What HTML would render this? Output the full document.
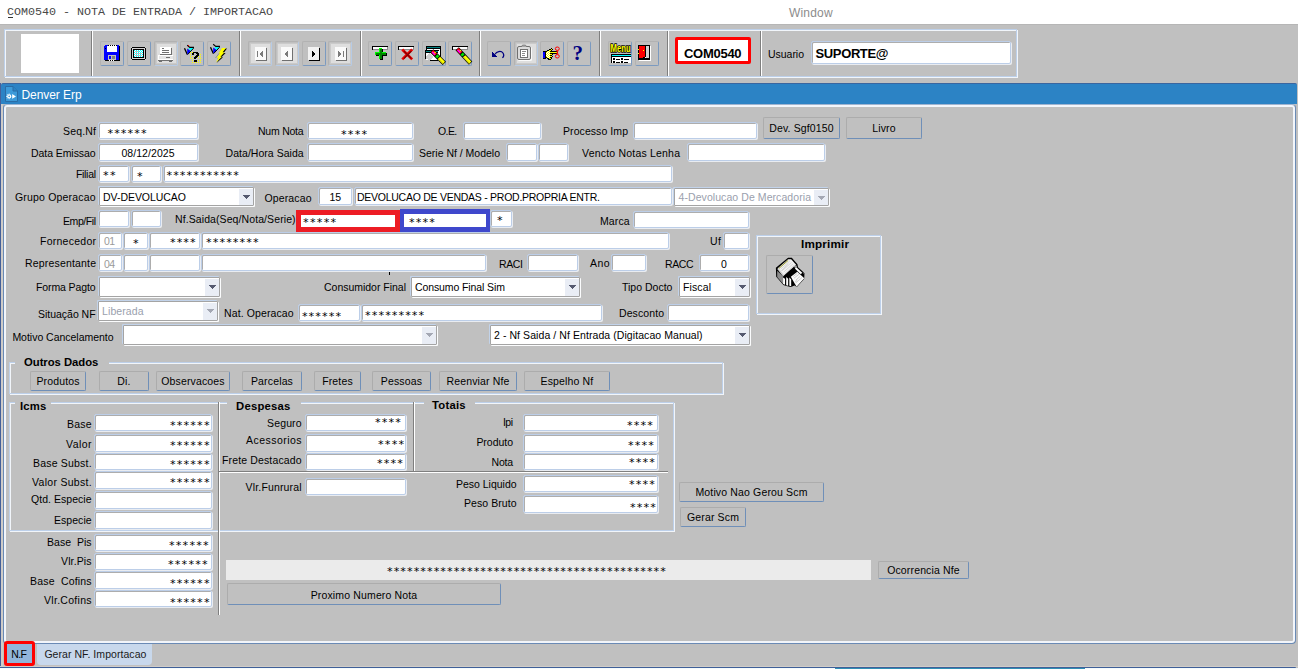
<!DOCTYPE html>
<html lang="pt-BR"><head><meta charset="utf-8"><title>COM0540 - NOTA DE ENTRADA / IMPORTACAO</title>
<style>
html,body{margin:0;padding:0}
body{width:1298px;height:669px;overflow:hidden;background:#c0c0c0;position:relative;font-family:"Liberation Sans",sans-serif;font-size:10.5px}
.t{position:absolute;white-space:pre;display:block}
.f{position:absolute;box-sizing:border-box;background:#fff;border:1px solid #bccee8;border-radius:2px;box-shadow:inset 1px 1px 0 #adadad,1px 1px 0 #e9ecf1}
.cb{position:absolute;box-sizing:border-box;background:#fff;border:1px solid #a4a4a4;border-radius:1px;box-shadow:-1px -1px 0 #c2d3ea,1px 1px 0 #fbfcfd}
.cb i{position:absolute;right:0;top:1px;bottom:0;width:14px;background:#e9edf5}
.cb b{position:absolute;right:6px;top:10px;width:1px;height:1px;color:#555a70;background:currentColor;box-shadow:-1px -1px 0 currentColor,0px -1px 0 currentColor,1px -1px 0 currentColor,-2px -2px 0 currentColor,-1px -2px 0 currentColor,0px -2px 0 currentColor,1px -2px 0 currentColor,2px -2px 0 currentColor,-3px -3px 0 currentColor,-2px -3px 0 currentColor,-1px -3px 0 currentColor,0px -3px 0 currentColor,1px -3px 0 currentColor,2px -3px 0 currentColor,3px -3px 0 currentColor}
.cb.dis b{color:#a4a8b4}
.btn{position:absolute;box-sizing:border-box;background:#c0c0c0;border:1px solid;border-color:#acacac #6f8fb8 #6f8fb8 #acacac;border-radius:2px;text-align:center;color:#000;white-space:nowrap;overflow:hidden;letter-spacing:0.15px}
.tb{position:absolute;box-sizing:border-box;width:24px;height:25px;border:1px solid;border-color:#b2b2b2 #7b9ac0 #7b9ac0 #b2b2b2;border-radius:2px}
.tb.d{border-color:#b2b2b2 #b6cbe6 #b6cbe6 #b2b2b2}
.tb.d:before{content:"";position:absolute;left:2px;top:2px;width:19px;height:19px;background:#dedede;box-shadow:0 0 0 1px #cacaca}
.tb svg{position:absolute;left:0;top:0}
.etch{position:absolute;box-sizing:border-box;border:1px solid #bdd0ea;box-shadow:inset 1px 1px 0 #f1f5fa,1px 1px 0 #f1f5fa}
.vsep{position:absolute;width:1px;background:#7f7f7f;box-shadow:1px 0 0 #fff}
.hsep{position:absolute;height:1px;background:#7f7f7f;box-shadow:0 1px 0 #fff}
</style></head>
<body>
<div style="position:absolute;left:0;top:0;width:1298px;height:24px;background:#fff"></div>
<span class="t" id="t1" style="left:7.00px;top:6.64px;font-size:11.7px;line-height:11.7px;color:#484848;font-family:'Liberation Mono', monospace;letter-spacing:-0.014px;">COM0540 - NOTA DE ENTRADA / IMPORTACAO</span>
<div style="position:absolute;left:8px;top:17px;width:5px;height:1px;background:#333"></div>
<span class="t" id="t2" style="left:789.00px;top:7.24px;font-size:12px;line-height:12px;color:#8c8c8c;font-family:'Liberation Sans', sans-serif;letter-spacing:0.183px;">Window</span>
<div class="etch" style="left:4px;top:29px;width:1013px;height:48px"></div>
<div style="position:absolute;left:21px;top:34px;width:58px;height:39px;background:#fff"></div>
<div class="vsep" style="left:91px;top:31px;height:45px"></div>
<div class="vsep" style="left:239px;top:31px;height:45px"></div>
<div class="vsep" style="left:360px;top:31px;height:45px"></div>
<div class="vsep" style="left:479px;top:31px;height:45px"></div>
<div class="vsep" style="left:599px;top:31px;height:45px"></div>
<div class="vsep" style="left:667px;top:31px;height:45px"></div>
<div class="vsep" style="left:760px;top:31px;height:45px"></div>
<div class="tb" style="left:100px;top:41px"></div>
<div class="tb" style="left:127px;top:41px"></div>
<div class="tb d" style="left:154px;top:41px"></div>
<div class="tb" style="left:180px;top:41px"></div>
<div class="tb" style="left:207px;top:41px"></div>
<div class="tb d" style="left:248px;top:41px"></div>
<div class="tb d" style="left:275px;top:41px"></div>
<div class="tb" style="left:302px;top:41px"></div>
<div class="tb d" style="left:328px;top:41px"></div>
<div class="tb" style="left:368px;top:41px"></div>
<div class="tb" style="left:395px;top:41px"></div>
<div class="tb" style="left:422px;top:41px"></div>
<div class="tb" style="left:448px;top:41px"></div>
<div class="tb" style="left:487px;top:41px"></div>
<div class="tb d" style="left:514px;top:41px"></div>
<div class="tb" style="left:540px;top:41px"></div>
<div class="tb" style="left:567px;top:41px"></div>
<div class="tb" style="left:608px;top:41px"></div>
<div class="tb" style="left:635px;top:41px"></div>
<svg style="position:absolute;left:96px;top:40px" width="570" height="28" viewBox="96 40 570 28" shape-rendering="crispEdges"><rect x="105" y="45" width="3" height="1" fill="#0000ff"/><rect x="108" y="45" width="1" height="1" fill="#000"/><rect x="109" y="45" width="1" height="1" fill="#fff"/><rect x="110" y="45" width="1" height="1" fill="#000"/><rect x="111" y="45" width="1" height="1" fill="#fff"/><rect x="112" y="45" width="1" height="1" fill="#000"/><rect x="113" y="45" width="1" height="1" fill="#fff"/><rect x="114" y="45" width="1" height="1" fill="#000"/><rect x="115" y="45" width="1" height="1" fill="#fff"/><rect x="116" y="45" width="1" height="1" fill="#000"/><rect x="117" y="45" width="2" height="1" fill="#0000ff"/><rect x="104" y="46" width="3" height="1" fill="#0000ff"/><rect x="107" y="46" width="10" height="1" fill="#fff"/><rect x="117" y="46" width="2" height="1" fill="#0000ff"/><rect x="119" y="46" width="1" height="1" fill="#000"/><rect x="104" y="47" width="3" height="1" fill="#0000ff"/><rect x="107" y="47" width="10" height="1" fill="#fff"/><rect x="117" y="47" width="2" height="1" fill="#0000ff"/><rect x="119" y="47" width="1" height="1" fill="#000"/><rect x="104" y="48" width="1" height="1" fill="#0000ff"/><rect x="105" y="48" width="1" height="1" fill="#000"/><rect x="106" y="48" width="1" height="1" fill="#0000ff"/><rect x="107" y="48" width="10" height="1" fill="#fff"/><rect x="117" y="48" width="2" height="1" fill="#0000ff"/><rect x="119" y="48" width="1" height="1" fill="#000"/><rect x="104" y="49" width="3" height="1" fill="#0000ff"/><rect x="107" y="49" width="10" height="1" fill="#fff"/><rect x="117" y="49" width="2" height="1" fill="#0000ff"/><rect x="119" y="49" width="1" height="1" fill="#000"/><rect x="104" y="50" width="3" height="1" fill="#0000ff"/><rect x="107" y="50" width="10" height="1" fill="#fff"/><rect x="117" y="50" width="2" height="1" fill="#0000ff"/><rect x="119" y="50" width="1" height="1" fill="#000"/><rect x="104" y="51" width="3" height="1" fill="#0000ff"/><rect x="107" y="51" width="10" height="1" fill="#fff"/><rect x="117" y="51" width="2" height="1" fill="#0000ff"/><rect x="119" y="51" width="1" height="1" fill="#000"/><rect x="104" y="52" width="15" height="1" fill="#0000ff"/><rect x="119" y="52" width="1" height="1" fill="#000"/><rect x="104" y="53" width="15" height="1" fill="#0000ff"/><rect x="119" y="53" width="1" height="1" fill="#000"/><rect x="104" y="54" width="15" height="1" fill="#0000ff"/><rect x="119" y="54" width="1" height="1" fill="#000"/><rect x="104" y="55" width="4" height="1" fill="#0000ff"/><rect x="108" y="55" width="8" height="1" fill="#c0c0c0"/><rect x="116" y="55" width="3" height="1" fill="#0000ff"/><rect x="119" y="55" width="1" height="1" fill="#000"/><rect x="104" y="56" width="4" height="1" fill="#0000ff"/><rect x="108" y="56" width="1" height="1" fill="#c0c0c0"/><rect x="109" y="56" width="2" height="1" fill="#0000ff"/><rect x="111" y="56" width="1" height="1" fill="#c0c0c0"/><rect x="112" y="56" width="3" height="1" fill="#808080"/><rect x="115" y="56" width="1" height="1" fill="#c0c0c0"/><rect x="116" y="56" width="3" height="1" fill="#0000ff"/><rect x="119" y="56" width="1" height="1" fill="#000"/><rect x="104" y="57" width="4" height="1" fill="#0000ff"/><rect x="108" y="57" width="1" height="1" fill="#c0c0c0"/><rect x="109" y="57" width="2" height="1" fill="#0000ff"/><rect x="111" y="57" width="1" height="1" fill="#c0c0c0"/><rect x="112" y="57" width="3" height="1" fill="#808080"/><rect x="115" y="57" width="1" height="1" fill="#c0c0c0"/><rect x="116" y="57" width="3" height="1" fill="#0000ff"/><rect x="119" y="57" width="1" height="1" fill="#000"/><rect x="104" y="58" width="4" height="1" fill="#0000ff"/><rect x="108" y="58" width="1" height="1" fill="#c0c0c0"/><rect x="109" y="58" width="2" height="1" fill="#0000ff"/><rect x="111" y="58" width="1" height="1" fill="#c0c0c0"/><rect x="112" y="58" width="3" height="1" fill="#808080"/><rect x="115" y="58" width="1" height="1" fill="#c0c0c0"/><rect x="116" y="58" width="3" height="1" fill="#0000ff"/><rect x="119" y="58" width="1" height="1" fill="#000"/><rect x="104" y="59" width="4" height="1" fill="#0000ff"/><rect x="108" y="59" width="8" height="1" fill="#c0c0c0"/><rect x="116" y="59" width="3" height="1" fill="#0000ff"/><rect x="119" y="59" width="1" height="1" fill="#000"/><rect x="105" y="60" width="4" height="1" fill="#000"/><rect x="109" y="60" width="1" height="1" fill="#fff"/><rect x="110" y="60" width="1" height="1" fill="#000"/><rect x="111" y="60" width="1" height="1" fill="#fff"/><rect x="112" y="60" width="1" height="1" fill="#000"/><rect x="113" y="60" width="1" height="1" fill="#fff"/><rect x="114" y="60" width="6" height="1" fill="#000"/><rect x="131" y="47" width="1" height="1" fill="#d4d4d4"/><rect x="132" y="47" width="13" height="1" fill="#000"/><rect x="145" y="47" width="1" height="1" fill="#d4d4d4"/><rect x="131" y="48" width="1" height="1" fill="#000"/><rect x="132" y="48" width="13" height="1" fill="#d4d4d4"/><rect x="145" y="48" width="1" height="1" fill="#000"/><rect x="131" y="49" width="1" height="1" fill="#000"/><rect x="132" y="49" width="1" height="1" fill="#d4d4d4"/><rect x="133" y="49" width="11" height="1" fill="#000"/><rect x="144" y="49" width="1" height="1" fill="#d4d4d4"/><rect x="145" y="49" width="1" height="1" fill="#000"/><rect x="131" y="50" width="1" height="1" fill="#000"/><rect x="132" y="50" width="1" height="1" fill="#d4d4d4"/><rect x="133" y="50" width="1" height="1" fill="#000"/><rect x="134" y="50" width="1" height="1" fill="#00ffff"/><rect x="135" y="50" width="1" height="1" fill="#fff"/><rect x="136" y="50" width="1" height="1" fill="#00ffff"/><rect x="137" y="50" width="1" height="1" fill="#fff"/><rect x="138" y="50" width="1" height="1" fill="#00ffff"/><rect x="139" y="50" width="1" height="1" fill="#fff"/><rect x="140" y="50" width="1" height="1" fill="#00ffff"/><rect x="141" y="50" width="1" height="1" fill="#fff"/><rect x="142" y="50" width="1" height="1" fill="#00ffff"/><rect x="143" y="50" width="1" height="1" fill="#000"/><rect x="144" y="50" width="1" height="1" fill="#d4d4d4"/><rect x="145" y="50" width="1" height="1" fill="#000"/><rect x="131" y="51" width="1" height="1" fill="#000"/><rect x="132" y="51" width="1" height="1" fill="#d4d4d4"/><rect x="133" y="51" width="1" height="1" fill="#000"/><rect x="134" y="51" width="1" height="1" fill="#fff"/><rect x="135" y="51" width="4" height="1" fill="#c0c0c0"/><rect x="139" y="51" width="1" height="1" fill="#00ffff"/><rect x="140" y="51" width="1" height="1" fill="#fff"/><rect x="141" y="51" width="1" height="1" fill="#00ffff"/><rect x="142" y="51" width="1" height="1" fill="#fff"/><rect x="143" y="51" width="1" height="1" fill="#000"/><rect x="144" y="51" width="1" height="1" fill="#d4d4d4"/><rect x="145" y="51" width="1" height="1" fill="#000"/><rect x="131" y="52" width="1" height="1" fill="#000"/><rect x="132" y="52" width="1" height="1" fill="#d4d4d4"/><rect x="133" y="52" width="1" height="1" fill="#000"/><rect x="134" y="52" width="1" height="1" fill="#00ffff"/><rect x="135" y="52" width="1" height="1" fill="#fff"/><rect x="136" y="52" width="1" height="1" fill="#00ffff"/><rect x="137" y="52" width="1" height="1" fill="#fff"/><rect x="138" y="52" width="1" height="1" fill="#00ffff"/><rect x="139" y="52" width="1" height="1" fill="#fff"/><rect x="140" y="52" width="1" height="1" fill="#00ffff"/><rect x="141" y="52" width="1" height="1" fill="#fff"/><rect x="142" y="52" width="1" height="1" fill="#00ffff"/><rect x="143" y="52" width="1" height="1" fill="#000"/><rect x="144" y="52" width="1" height="1" fill="#d4d4d4"/><rect x="145" y="52" width="1" height="1" fill="#000"/><rect x="131" y="53" width="1" height="1" fill="#000"/><rect x="132" y="53" width="1" height="1" fill="#d4d4d4"/><rect x="133" y="53" width="1" height="1" fill="#000"/><rect x="134" y="53" width="1" height="1" fill="#fff"/><rect x="135" y="53" width="7" height="1" fill="#c0c0c0"/><rect x="142" y="53" width="1" height="1" fill="#fff"/><rect x="143" y="53" width="1" height="1" fill="#000"/><rect x="144" y="53" width="1" height="1" fill="#d4d4d4"/><rect x="145" y="53" width="1" height="1" fill="#000"/><rect x="131" y="54" width="1" height="1" fill="#000"/><rect x="132" y="54" width="1" height="1" fill="#d4d4d4"/><rect x="133" y="54" width="1" height="1" fill="#000"/><rect x="134" y="54" width="1" height="1" fill="#00ffff"/><rect x="135" y="54" width="1" height="1" fill="#fff"/><rect x="136" y="54" width="1" height="1" fill="#00ffff"/><rect x="137" y="54" width="1" height="1" fill="#fff"/><rect x="138" y="54" width="1" height="1" fill="#00ffff"/><rect x="139" y="54" width="1" height="1" fill="#fff"/><rect x="140" y="54" width="1" height="1" fill="#00ffff"/><rect x="141" y="54" width="1" height="1" fill="#fff"/><rect x="142" y="54" width="1" height="1" fill="#00ffff"/><rect x="143" y="54" width="1" height="1" fill="#000"/><rect x="144" y="54" width="1" height="1" fill="#d4d4d4"/><rect x="145" y="54" width="1" height="1" fill="#000"/><rect x="131" y="55" width="1" height="1" fill="#000"/><rect x="132" y="55" width="1" height="1" fill="#d4d4d4"/><rect x="133" y="55" width="1" height="1" fill="#000"/><rect x="134" y="55" width="1" height="1" fill="#fff"/><rect x="135" y="55" width="7" height="1" fill="#c0c0c0"/><rect x="142" y="55" width="1" height="1" fill="#fff"/><rect x="143" y="55" width="1" height="1" fill="#000"/><rect x="144" y="55" width="1" height="1" fill="#d4d4d4"/><rect x="145" y="55" width="1" height="1" fill="#000"/><rect x="131" y="56" width="1" height="1" fill="#000"/><rect x="132" y="56" width="1" height="1" fill="#d4d4d4"/><rect x="133" y="56" width="1" height="1" fill="#000"/><rect x="134" y="56" width="1" height="1" fill="#00ffff"/><rect x="135" y="56" width="1" height="1" fill="#fff"/><rect x="136" y="56" width="1" height="1" fill="#00ffff"/><rect x="137" y="56" width="1" height="1" fill="#fff"/><rect x="138" y="56" width="1" height="1" fill="#00ffff"/><rect x="139" y="56" width="1" height="1" fill="#fff"/><rect x="140" y="56" width="1" height="1" fill="#00ffff"/><rect x="141" y="56" width="1" height="1" fill="#fff"/><rect x="142" y="56" width="1" height="1" fill="#00ffff"/><rect x="143" y="56" width="1" height="1" fill="#000"/><rect x="144" y="56" width="1" height="1" fill="#d4d4d4"/><rect x="145" y="56" width="1" height="1" fill="#000"/><rect x="131" y="57" width="1" height="1" fill="#000"/><rect x="132" y="57" width="1" height="1" fill="#d4d4d4"/><rect x="133" y="57" width="11" height="1" fill="#000"/><rect x="144" y="57" width="1" height="1" fill="#d4d4d4"/><rect x="145" y="57" width="1" height="1" fill="#000"/><rect x="131" y="58" width="1" height="1" fill="#000"/><rect x="132" y="58" width="13" height="1" fill="#d4d4d4"/><rect x="145" y="58" width="1" height="1" fill="#000"/><rect x="131" y="59" width="1" height="1" fill="#d4d4d4"/><rect x="132" y="59" width="13" height="1" fill="#000"/><rect x="145" y="59" width="1" height="1" fill="#d4d4d4"/><rect x="160" y="47" width="11" height="1" fill="#fff"/><rect x="160" y="48" width="2" height="1" fill="#fff"/><rect x="162" y="48" width="2" height="1" fill="#707070"/><rect x="164" y="48" width="7" height="1" fill="#fff"/><rect x="171" y="48" width="1" height="1" fill="#707070"/><rect x="160" y="49" width="11" height="1" fill="#fff"/><rect x="171" y="49" width="1" height="1" fill="#707070"/><rect x="160" y="50" width="2" height="1" fill="#fff"/><rect x="162" y="50" width="7" height="1" fill="#707070"/><rect x="169" y="50" width="2" height="1" fill="#fff"/><rect x="171" y="50" width="1" height="1" fill="#707070"/><rect x="160" y="51" width="11" height="1" fill="#fff"/><rect x="171" y="51" width="1" height="1" fill="#707070"/><rect x="160" y="52" width="2" height="1" fill="#fff"/><rect x="162" y="52" width="7" height="1" fill="#707070"/><rect x="169" y="52" width="2" height="1" fill="#fff"/><rect x="171" y="52" width="1" height="1" fill="#707070"/><rect x="160" y="53" width="11" height="1" fill="#fff"/><rect x="171" y="53" width="1" height="1" fill="#707070"/><rect x="160" y="54" width="12" height="1" fill="#707070"/><rect x="158" y="55" width="15" height="1" fill="#fff"/><rect x="158" y="56" width="1" height="1" fill="#fff"/><rect x="159" y="56" width="14" height="1" fill="#e6e6e6"/><rect x="173" y="56" width="1" height="1" fill="#d8d8d8"/><rect x="158" y="57" width="1" height="1" fill="#fff"/><rect x="159" y="57" width="7" height="1" fill="#e6e6e6"/><rect x="166" y="57" width="4" height="1" fill="#707070"/><rect x="170" y="57" width="3" height="1" fill="#e6e6e6"/><rect x="173" y="57" width="1" height="1" fill="#d8d8d8"/><rect x="158" y="58" width="1" height="1" fill="#fff"/><rect x="159" y="58" width="14" height="1" fill="#e6e6e6"/><rect x="173" y="58" width="1" height="1" fill="#d8d8d8"/><rect x="158" y="59" width="15" height="1" fill="#fff"/><rect x="173" y="59" width="1" height="1" fill="#d8d8d8"/><rect x="158" y="60" width="15" height="1" fill="#707070"/><rect x="159" y="61" width="3" height="1" fill="#707070"/><rect x="169" y="61" width="3" height="1" fill="#707070"/><g shape-rendering="geometricPrecision"><path d="M184.5 48.3L187.3 54.5" stroke="#000" stroke-width="1.3" fill="none"/><path d="M187.2 48.6L191 51L187.2 54.4Z" fill="#0000ff"/><path d="M188.3 48L193.6 48L190.6 51.3Z" fill="#00ffff"/><path d="M187.2 45.3L189.8 47.4L194 47.4" stroke="#000" stroke-width="1.1" fill="none"/><path d="M193.6 48.2L187.6 54.6" stroke="#000" stroke-width="1" fill="none"/></g><rect x="188" y="45" width="1" height="1" fill="#ff0000"/><rect x="190" y="52" width="1" height="1" fill="#ffff00"/><rect x="192" y="52" width="1" height="1" fill="#ffff00"/><rect x="190" y="54" width="1" height="1" fill="#ffff00"/><rect x="200" y="54" width="1" height="1" fill="#ffff00"/><rect x="190" y="56" width="1" height="1" fill="#ffff00"/><rect x="192" y="56" width="1" height="1" fill="#ffff00"/><rect x="198" y="56" width="1" height="1" fill="#ffff00"/><rect x="200" y="56" width="1" height="1" fill="#ffff00"/><rect x="190" y="58" width="1" height="1" fill="#ffff00"/><rect x="192" y="58" width="1" height="1" fill="#ffff00"/><rect x="198" y="58" width="1" height="1" fill="#ffff00"/><rect x="200" y="58" width="1" height="1" fill="#ffff00"/><rect x="192" y="60" width="1" height="1" fill="#ffff00"/><rect x="198" y="60" width="1" height="1" fill="#ffff00"/><rect x="200" y="60" width="1" height="1" fill="#ffff00"/><rect x="192" y="62" width="1" height="1" fill="#ffff00"/><rect x="194" y="62" width="1" height="1" fill="#ffff00"/><rect x="196" y="62" width="1" height="1" fill="#ffff00"/><rect x="198" y="62" width="1" height="1" fill="#ffff00"/><rect x="200" y="62" width="1" height="1" fill="#ffff00"/><rect x="193" y="52" width="5" height="1" fill="#000"/><rect x="192" y="53" width="2" height="1" fill="#000"/><rect x="196" y="53" width="3" height="1" fill="#000"/><rect x="192" y="54" width="2" height="1" fill="#000"/><rect x="197" y="54" width="2" height="1" fill="#000"/><rect x="196" y="55" width="3" height="1" fill="#000"/><rect x="195" y="56" width="3" height="1" fill="#000"/><rect x="194" y="57" width="3" height="1" fill="#000"/><rect x="194" y="58" width="2" height="1" fill="#000"/><rect x="194" y="60" width="3" height="1" fill="#000"/><rect x="194" y="61" width="3" height="1" fill="#000"/><g shape-rendering="geometricPrecision"><path d="M210.5 47.3L213.3 53.5" stroke="#000" stroke-width="1.3" fill="none"/><path d="M213.2 47.6L217 50L213.2 53.4Z" fill="#0000ff"/><path d="M214.3 47L219.6 47L216.6 50.3Z" fill="#00ffff"/><path d="M213.2 44.3L215.8 46.4L220 46.4" stroke="#000" stroke-width="1.1" fill="none"/><path d="M219.6 47.2L213.6 53.6" stroke="#000" stroke-width="1" fill="none"/></g><g shape-rendering="geometricPrecision"><path d="M223 48.6L227 48.6L223.6 52.9L225.6 52.9L221.4 57.3L223 57.3L216.6 63L219.4 58.4L217.6 58.4L221 54L219.4 54Z" fill="#000"/><path d="M221.4 49.2L219 53.6L215.6 58" stroke="#8a8a8a" stroke-width="0.9" fill="none"/><path d="M222 48L226 48L222.6 52.3L224.6 52.3L220.4 56.7L222 56.7L216 62.4L218.4 57.8L216.6 57.8L220 53.4L218.4 53.4Z" fill="#ffff00"/></g><rect x="255" y="47" width="11" height="13" fill="#fafafa"/><rect x="266" y="48" width="1" height="13" fill="#707070"/><rect x="256" y="60" width="11" height="1" fill="#707070"/><rect x="257" y="51" width="1" height="6" fill="#7a7a7a"/><rect x="262" y="51" width="1" height="1" fill="#7a7a7a"/><rect x="261" y="52" width="2" height="1" fill="#7a7a7a"/><rect x="260" y="53" width="3" height="1" fill="#7a7a7a"/><rect x="260" y="54" width="3" height="1" fill="#7a7a7a"/><rect x="261" y="55" width="2" height="1" fill="#7a7a7a"/><rect x="262" y="56" width="1" height="1" fill="#7a7a7a"/><rect x="281" y="47" width="11" height="13" fill="#fafafa"/><rect x="292" y="48" width="1" height="13" fill="#707070"/><rect x="282" y="60" width="11" height="1" fill="#707070"/><rect x="287" y="51" width="1" height="1" fill="#7a7a7a"/><rect x="286" y="52" width="2" height="1" fill="#7a7a7a"/><rect x="285" y="53" width="3" height="1" fill="#7a7a7a"/><rect x="285" y="54" width="3" height="1" fill="#7a7a7a"/><rect x="286" y="55" width="2" height="1" fill="#7a7a7a"/><rect x="287" y="56" width="1" height="1" fill="#7a7a7a"/><rect x="308" y="47" width="11" height="13" fill="#f2f2f2"/><rect x="319" y="48" width="1" height="13" fill="#000"/><rect x="309" y="60" width="11" height="1" fill="#000"/><rect x="312" y="51" width="1" height="1" fill="#000"/><rect x="312" y="52" width="2" height="1" fill="#000"/><rect x="312" y="53" width="3" height="1" fill="#000"/><rect x="312" y="54" width="3" height="1" fill="#000"/><rect x="312" y="55" width="2" height="1" fill="#000"/><rect x="312" y="56" width="1" height="1" fill="#000"/><rect x="335" y="47" width="11" height="13" fill="#fafafa"/><rect x="346" y="48" width="1" height="13" fill="#707070"/><rect x="336" y="60" width="11" height="1" fill="#707070"/><rect x="338" y="51" width="1" height="1" fill="#7a7a7a"/><rect x="338" y="52" width="2" height="1" fill="#7a7a7a"/><rect x="338" y="53" width="3" height="1" fill="#7a7a7a"/><rect x="338" y="54" width="3" height="1" fill="#7a7a7a"/><rect x="338" y="55" width="2" height="1" fill="#7a7a7a"/><rect x="338" y="56" width="1" height="1" fill="#7a7a7a"/><rect x="343" y="51" width="1" height="6" fill="#7a7a7a"/><rect x="372" y="46" width="16" height="1" fill="#000"/><rect x="372" y="46" width="1" height="4" fill="#000"/><rect x="373" y="47" width="14" height="2" fill="#fff"/><rect x="373" y="49" width="15" height="1" fill="#8c8c8c"/><rect x="387" y="47" width="1" height="3" fill="#8c8c8c"/><rect x="380" y="49" width="3" height="11" fill="#000"/><rect x="376" y="53" width="11" height="3" fill="#000"/><rect x="379" y="48" width="3" height="11" fill="#00ff00"/><rect x="375" y="52" width="11" height="3" fill="#00ff00"/><rect x="380" y="49" width="2" height="10" fill="#008000"/><rect x="376" y="53" width="10" height="2" fill="#008000"/><rect x="398" y="46" width="16" height="1" fill="#000"/><rect x="398" y="46" width="1" height="4" fill="#000"/><rect x="399" y="47" width="14" height="2" fill="#fff"/><rect x="399" y="49" width="15" height="1" fill="#8c8c8c"/><rect x="413" y="47" width="1" height="3" fill="#8c8c8c"/><g shape-rendering="geometricPrecision"><path d="M403.2 50.4L411.2 58.4M411.2 50.4L403.2 58.4" stroke="#f00000" stroke-width="2.7" stroke-linecap="square" fill="none"/><path d="M403.8 51L411.4 58.6M411.4 51L403.8 58.6" stroke="#800000" stroke-width="1.3" fill="none"/></g><rect x="426" y="46" width="15" height="1" fill="#000"/><rect x="426" y="46" width="1" height="4" fill="#000"/><rect x="440" y="46" width="1" height="11" fill="#000"/><rect x="427" y="47" width="13" height="1" fill="#008080"/><rect x="427" y="48" width="13" height="1" fill="#000"/><rect x="427" y="49" width="13" height="8" fill="#fff"/><rect x="425" y="50" width="14" height="1" fill="#000"/><rect x="425" y="50" width="1" height="9" fill="#000"/><rect x="426" y="51" width="12" height="1" fill="#008080"/><rect x="426" y="52" width="12" height="1" fill="#000"/><rect x="426" y="53" width="13" height="7" fill="#fff"/><rect x="430" y="60" width="8" height="1" fill="#000"/><path d="M426 59L426 56L430 53L433 57L430 60Z" fill="#d0d0d0"/><g shape-rendering="geometricPrecision" transform="translate(432.2 51.2) rotate(45)"><rect x="-0.6" y="-2.3" width="17.7" height="4.6" fill="#000"/><rect x="0" y="-1.6" width="5.0" height="3.2" fill="#ff0000"/><rect x="0.6" y="-0.2" width="3.8" height="1.6" fill="#ff00ff"/><rect x="2.2" y="-1.7" width="1.4" height="1.3" fill="#ffff00"/><rect x="6.0" y="-1.6" width="2.6" height="3.2" fill="#00e000"/><rect x="9.6" y="-1.6" width="6.9" height="3.2" fill="#ffff00"/><rect x="9.6" y="0.7" width="6.9" height="0.9" fill="#c8c800"/></g><rect x="452" y="46" width="16" height="1" fill="#000"/><rect x="452" y="46" width="1" height="4" fill="#000"/><rect x="453" y="47" width="14" height="2" fill="#fff"/><rect x="453" y="49" width="15" height="1" fill="#8c8c8c"/><rect x="467" y="47" width="1" height="3" fill="#8c8c8c"/><g shape-rendering="geometricPrecision" transform="translate(457.6 49.2) rotate(47)"><rect x="-0.6" y="-2.3" width="19.68" height="4.6" fill="#000"/><rect x="0" y="-1.6" width="5.0" height="3.2" fill="#ff0000"/><rect x="0.6" y="-0.2" width="3.8" height="1.6" fill="#ff00ff"/><rect x="2.2" y="-1.7" width="1.4" height="1.3" fill="#ffff00"/><rect x="6.0" y="-1.6" width="2.6" height="3.2" fill="#00e000"/><rect x="9.6" y="-1.6" width="8.88" height="3.2" fill="#ffff00"/><rect x="9.6" y="0.7" width="8.88" height="0.9" fill="#c8c800"/></g><rect x="492" y="52" width="1" height="1" fill="#000080"/><rect x="492" y="53" width="2" height="1" fill="#000080"/><rect x="492" y="54" width="3" height="1" fill="#000080"/><rect x="492" y="55" width="4" height="1" fill="#000080"/><rect x="492" y="56" width="5" height="1" fill="#000080"/><path shape-rendering="geometricPrecision" d="M495 54.2C496.5 51.5 501 50.2 503 53C504.2 55 503.6 56.8 502.4 57.8" stroke="#000080" stroke-width="1.25" fill="none"/><g shape-rendering="geometricPrecision"><rect x="518" y="47" width="14" height="14" rx="1.5" fill="#fafafa"/><rect x="517.5" y="46.5" width="13" height="13" rx="1.5" fill="#dcdcdc" stroke="#707070"/><path d="M521.5 46.5L522.5 45.2L525.5 45.2L526.5 46.5" stroke="#707070" fill="#dcdcdc"/><rect x="520.5" y="49.5" width="7" height="8" fill="#fff" stroke="#707070"/><path d="M522 51.5H526M522 53.5H525M522 55.5H525" stroke="#8a8a8a"/></g><rect x="551" y="48" width="1" height="1" fill="#000"/><rect x="549" y="49" width="2" height="1" fill="#000"/><rect x="551" y="49" width="1" height="1" fill="#ffff00"/><rect x="552" y="49" width="1" height="1" fill="#000"/><rect x="547" y="50" width="2" height="1" fill="#000"/><rect x="549" y="50" width="2" height="1" fill="#ffff00"/><rect x="551" y="50" width="1" height="1" fill="#000"/><rect x="543" y="51" width="4" height="1" fill="#000"/><rect x="547" y="51" width="1" height="1" fill="#ffff00"/><rect x="548" y="51" width="1" height="1" fill="#fff"/><rect x="549" y="51" width="1" height="1" fill="#ffff00"/><rect x="550" y="51" width="7" height="1" fill="#000"/><rect x="543" y="52" width="2" height="1" fill="#0000ff"/><rect x="545" y="52" width="1" height="1" fill="#000"/><rect x="546" y="52" width="1" height="1" fill="#ffff00"/><rect x="547" y="52" width="1" height="1" fill="#fff"/><rect x="548" y="52" width="1" height="1" fill="#ffff00"/><rect x="549" y="52" width="1" height="1" fill="#fff"/><rect x="550" y="52" width="7" height="1" fill="#ffff00"/><rect x="557" y="52" width="1" height="1" fill="#000"/><rect x="543" y="53" width="2" height="1" fill="#0000ff"/><rect x="545" y="53" width="1" height="1" fill="#000"/><rect x="546" y="53" width="1" height="1" fill="#fff"/><rect x="547" y="53" width="1" height="1" fill="#ffff00"/><rect x="548" y="53" width="1" height="1" fill="#fff"/><rect x="549" y="53" width="1" height="1" fill="#ffff00"/><rect x="550" y="53" width="7" height="1" fill="#000"/><rect x="543" y="54" width="2" height="1" fill="#0000ff"/><rect x="545" y="54" width="1" height="1" fill="#000"/><rect x="546" y="54" width="1" height="1" fill="#ffff00"/><rect x="547" y="54" width="1" height="1" fill="#fff"/><rect x="548" y="54" width="1" height="1" fill="#ffff00"/><rect x="549" y="54" width="1" height="1" fill="#fff"/><rect x="550" y="54" width="2" height="1" fill="#ffff00"/><rect x="552" y="54" width="1" height="1" fill="#000"/><rect x="543" y="55" width="2" height="1" fill="#0000ff"/><rect x="545" y="55" width="1" height="1" fill="#000"/><rect x="546" y="55" width="1" height="1" fill="#fff"/><rect x="547" y="55" width="1" height="1" fill="#ffff00"/><rect x="548" y="55" width="1" height="1" fill="#fff"/><rect x="549" y="55" width="1" height="1" fill="#ffff00"/><rect x="550" y="55" width="2" height="1" fill="#000"/><rect x="543" y="56" width="2" height="1" fill="#0000ff"/><rect x="545" y="56" width="1" height="1" fill="#000"/><rect x="546" y="56" width="1" height="1" fill="#ffff00"/><rect x="547" y="56" width="1" height="1" fill="#fff"/><rect x="548" y="56" width="1" height="1" fill="#ffff00"/><rect x="549" y="56" width="1" height="1" fill="#fff"/><rect x="550" y="56" width="2" height="1" fill="#ffff00"/><rect x="552" y="56" width="1" height="1" fill="#000"/><rect x="543" y="57" width="2" height="1" fill="#0000ff"/><rect x="545" y="57" width="2" height="1" fill="#000"/><rect x="547" y="57" width="1" height="1" fill="#ffff00"/><rect x="548" y="57" width="1" height="1" fill="#fff"/><rect x="549" y="57" width="1" height="1" fill="#ffff00"/><rect x="550" y="57" width="2" height="1" fill="#000"/><rect x="543" y="58" width="3" height="1" fill="#000"/><rect x="547" y="58" width="2" height="1" fill="#000"/><rect x="549" y="58" width="2" height="1" fill="#ffff00"/><rect x="551" y="58" width="1" height="1" fill="#000"/><rect x="548" y="59" width="3" height="1" fill="#000"/><g shape-rendering="geometricPrecision" fill="none" stroke="#ff0000" stroke-width="1"><ellipse cx="557.3" cy="48.7" rx="2" ry="1.7"/><ellipse cx="557.3" cy="56.3" rx="2" ry="1.7"/><path d="M556.8 50.3L558 54.6M558 50.3L556.8 54.6"/></g><rect x="611" y="54" width="20" height="1" fill="#000"/><rect x="611" y="54" width="1" height="9" fill="#000"/><rect x="612" y="55" width="19" height="1" fill="#00ffff"/><rect x="612" y="56" width="19" height="1" fill="#000"/><rect x="612" y="57" width="19" height="6" fill="#fff"/><rect x="613" y="58" width="2" height="2" fill="#000"/><rect x="613" y="61" width="2" height="2" fill="#000"/><rect x="621" y="58" width="2" height="2" fill="#000"/><rect x="621" y="61" width="2" height="2" fill="#000"/><rect x="616" y="59" width="4" height="1" fill="#000"/><rect x="616" y="62" width="4" height="1" fill="#000"/><rect x="624" y="59" width="5" height="1" fill="#000"/><rect x="624" y="62" width="4" height="1" fill="#000"/><rect x="638" y="45" width="12" height="15" fill="#000"/><rect x="650" y="46" width="1" height="15" fill="#fff"/><rect x="639" y="60" width="11" height="1" fill="#fff"/><rect x="645" y="46" width="4" height="12" fill="#d2d2d2"/><rect x="645" y="46" width="1" height="12" fill="#fff"/><rect x="639" y="46" width="6" height="11" fill="#ff0000"/><rect x="639" y="57" width="4" height="1" fill="#ff0000"/><rect x="645" y="46" width="1" height="10" fill="#000"/><rect x="643" y="57" width="2" height="1" fill="#000"/><rect x="645" y="56" width="1" height="1" fill="#000"/><rect x="638" y="49" width="1" height="1" fill="#ffff00"/><rect x="638" y="53" width="1" height="1" fill="#ffff00"/><rect x="643" y="50" width="1" height="1" fill="#ffff00"/><text x="610.6" y="51.6" font-family="Liberation Sans, sans-serif" font-weight="bold" font-size="10" textLength="20" lengthAdjust="spacingAndGlyphs" fill="#ffff00" stroke="#000" stroke-width="1.6" paint-order="stroke" shape-rendering="geometricPrecision">Menu</text><text x="572.6" y="60" font-family="Liberation Serif, serif" font-weight="bold" font-size="21" fill="#000080" shape-rendering="geometricPrecision">?</text></svg>
<div style="position:absolute;left:675px;top:37px;width:70px;height:21px;border:3px solid #ff0000;background:#fff;border-radius:2px"></div>
<span class="t" id="t3" style="left:684.00px;top:47.00px;font-size:13px;line-height:13px;color:#000;font-family:'Liberation Sans', sans-serif;font-weight:bold;letter-spacing:-0.275px;">COM0540</span>
<span class="t" id="t4" style="left:768.00px;top:48.61px;font-size:10.5px;line-height:10.5px;color:#000;font-family:'Liberation Sans', sans-serif;letter-spacing:-0.031px;">Usuario</span>
<div class="f" style="left:811px;top:41px;width:200px;height:23px"></div>
<span class="t" id="t5" style="left:815.60px;top:47.00px;font-size:13px;line-height:13px;color:#000;font-family:'Liberation Sans', sans-serif;font-weight:bold;letter-spacing:-0.390px;">SUPORTE@</span>
<div style="position:absolute;left:0;top:83px;width:1297px;height:585px;background:#c0c0c0;border-left:1px solid #44609a;box-sizing:border-box;box-shadow:inset 2px 0 0 #cfccc8"></div>
<div style="position:absolute;left:1px;top:83px;width:1296px;height:21px;background:#2c83c5;border-top:1px solid #3a66a0;box-sizing:border-box;border-radius:2px 2px 0 0"></div>
<svg style="position:absolute;left:5px;top:86px" width="14" height="16" viewBox="0 0 14 16"><path d="M0.5 0.5H8L12.5 5V15.5H0.5Z" fill="#3d9ad9" stroke="#2a6ca6"/><path d="M8 0.5V5H12.5" fill="#2c83c5" stroke="#2a6ca6"/><path d="M1.5 1.5H6V7.5H1.5Z" fill="#3d9ad9"/><circle cx="4.2" cy="10.4" r="2.1" fill="#fff"/><circle cx="4.2" cy="10.4" r="0.8" fill="#3d9ad9"/><path d="M2 10.4H1.2M4.2 7.6V8.4M4.2 12.4V13.2M2.3 8.4L2.8 9M2.3 12.4L2.8 11.8" stroke="#fff" stroke-width="0.9"/><path d="M7.2 8L11 10.4L7.2 12.8Z" fill="#fff"/></svg>
<span class="t" id="t6" style="left:21.50px;top:88.84px;font-size:12px;line-height:12px;color:#fff;font-family:'Liberation Sans', sans-serif;letter-spacing:-0.067px;">Denver Erp</span>
<div style="position:absolute;left:3px;top:104px;width:1293px;height:540px;border:1px solid #6a8ab5;border-top-color:#9fb4d0;border-radius:4px;box-sizing:border-box;box-shadow:inset 0 0 0 2px #f2f5fa"></div>
<span class="t" id="t7" style="left:63.00px;top:126.11px;font-size:10.5px;line-height:10.5px;color:#000;font-family:'Liberation Sans', sans-serif;letter-spacing:0.178px;">Seq.Nf</span>
<div class="f" style="left:98px;top:122px;width:100px;height:17px"></div>
<span class="t" id="s8" style="left:107.01px;top:128.20px;font-size:11px;line-height:11px;letter-spacing:0.054px;font-family:'DejaVu Sans Mono', 'Liberation Mono', monospace;">******</span>
<span class="t" id="t9" style="left:258.00px;top:126.11px;font-size:10.5px;line-height:10.5px;color:#000;font-family:'Liberation Sans', sans-serif;letter-spacing:-0.238px;">Num Nota</span>
<div class="f" style="left:307px;top:122px;width:106px;height:17px"></div>
<span class="t" id="s10" style="left:340.41px;top:128.70px;font-size:11px;line-height:11px;letter-spacing:0.238px;font-family:'DejaVu Sans Mono', 'Liberation Mono', monospace;">****</span>
<span class="t" id="t11" style="left:438.00px;top:126.11px;font-size:10.5px;line-height:10.5px;color:#000;font-family:'Liberation Sans', sans-serif;letter-spacing:-0.600px;">O.E.</span>
<div class="f" style="left:463px;top:122px;width:78px;height:17px"></div>
<span class="t" id="t12" style="left:563.00px;top:126.11px;font-size:10.5px;line-height:10.5px;color:#000;font-family:'Liberation Sans', sans-serif;letter-spacing:0.072px;">Processo Imp</span>
<div class="f" style="left:633px;top:122px;width:124px;height:17px"></div>
<div class="btn" style="left:763px;top:117px;width:77px;height:22px;line-height:20px;font-size:10.5px"><span style="position:relative;top:0px">Dev. Sgf0150</span></div>
<div class="btn" style="left:846px;top:117px;width:76px;height:22px;line-height:20px;font-size:10.5px"><span style="position:relative;top:0px">Livro</span></div>
<span class="t" id="t13" style="left:31.00px;top:148.11px;font-size:10.5px;line-height:10.5px;color:#000;font-family:'Liberation Sans', sans-serif;letter-spacing:-0.069px;">Data Emissao</span>
<div class="f" style="left:98px;top:143px;width:100px;height:18px"></div>
<span class="t" id="t14" style="left:121.40px;top:148.11px;font-size:10.5px;line-height:10.5px;color:#000;font-family:'Liberation Sans', sans-serif;letter-spacing:0.071px;">08/12/2025</span>
<span class="t" id="t15" style="left:225.60px;top:148.11px;font-size:10.5px;line-height:10.5px;color:#000;font-family:'Liberation Sans', sans-serif;letter-spacing:0.026px;">Data/Hora Saida</span>
<div class="f" style="left:307px;top:143px;width:106px;height:18px"></div>
<span class="t" id="t16" style="left:419.00px;top:148.11px;font-size:10.5px;line-height:10.5px;color:#000;font-family:'Liberation Sans', sans-serif;letter-spacing:-0.008px;">Serie Nf / Modelo</span>
<div class="f" style="left:506px;top:143px;width:31px;height:18px"></div>
<div class="f" style="left:538px;top:143px;width:30px;height:18px"></div>
<span class="t" id="t17" style="left:582.00px;top:148.11px;font-size:10.5px;line-height:10.5px;color:#000;font-family:'Liberation Sans', sans-serif;letter-spacing:0.201px;">Vencto Notas Lenha</span>
<div class="f" style="left:687px;top:143px;width:138px;height:18px"></div>
<span class="t" id="t18" style="left:76.00px;top:169.11px;font-size:10.5px;line-height:10.5px;color:#000;font-family:'Liberation Sans', sans-serif;letter-spacing:-0.319px;">Filial</span>
<div class="f" style="left:98px;top:165px;width:31px;height:17px"></div>
<div class="f" style="left:131px;top:165px;width:30px;height:17px"></div>
<div class="f" style="left:163px;top:165px;width:509px;height:17px"></div>
<span class="t" id="s19" style="left:102.41px;top:170.00px;font-size:11px;line-height:11px;letter-spacing:0.358px;font-family:'DejaVu Sans Mono', 'Liberation Mono', monospace;">**</span>
<span class="t" id="s20" style="left:136.61px;top:170.70px;font-size:11px;line-height:11px;letter-spacing:0.000px;font-family:'DejaVu Sans Mono', 'Liberation Mono', monospace;">*</span>
<span class="t" id="s21" style="left:166.01px;top:170.00px;font-size:11px;line-height:11px;letter-spacing:0.056px;font-family:'DejaVu Sans Mono', 'Liberation Mono', monospace;">***********</span>
<span class="t" id="t22" style="left:15.00px;top:191.61px;font-size:10.5px;line-height:10.5px;color:#000;font-family:'Liberation Sans', sans-serif;letter-spacing:0.183px;">Grupo Operacao</span>
<div class="cb" style="left:99px;top:187px;width:155px;height:19px"><i></i><b></b></div>
<span class="t" id="t23" style="left:103.00px;top:191.61px;font-size:10.5px;line-height:10.5px;color:#000;font-family:'Liberation Sans', sans-serif;letter-spacing:-0.040px;">DV-DEVOLUCAO</span>
<span class="t" id="t24" style="left:264.40px;top:192.61px;font-size:10.5px;line-height:10.5px;color:#000;font-family:'Liberation Sans', sans-serif;letter-spacing:0.154px;">Operacao</span>
<div class="f" style="left:318px;top:187px;width:34px;height:18px"></div>
<span class="t" id="t25" style="left:329.50px;top:191.61px;font-size:10.5px;line-height:10.5px;color:#000;font-family:'Liberation Sans', sans-serif;letter-spacing:-0.188px;">15</span>
<div class="f" style="left:354px;top:187px;width:318px;height:18px"></div>
<span class="t" id="t26" style="left:357.00px;top:191.61px;font-size:10.5px;line-height:10.5px;color:#000;font-family:'Liberation Sans', sans-serif;letter-spacing:-0.262px;">DEVOLUCAO DE VENDAS - PROD.PROPRIA ENTR.</span>
<div class="cb dis" style="left:674px;top:188px;width:155px;height:18px"><i></i><b></b></div>
<span class="t" id="t27" style="left:678.50px;top:192.11px;font-size:10.5px;line-height:10.5px;color:#9aa0ad;font-family:'Liberation Sans', sans-serif;letter-spacing:0.074px;">4-Devolucao De Mercadoria</span>
<span class="t" id="t28" style="left:63.00px;top:216.11px;font-size:10.5px;line-height:10.5px;color:#000;font-family:'Liberation Sans', sans-serif;letter-spacing:-0.432px;">Emp/Fil</span>
<div class="f" style="left:98px;top:210px;width:31px;height:17px"></div>
<div class="f" style="left:131px;top:210px;width:30px;height:17px"></div>
<span class="t" id="t29" style="left:175.00px;top:214.11px;font-size:10.5px;line-height:10.5px;color:#000;font-family:'Liberation Sans', sans-serif;letter-spacing:0.092px;">Nf.Saida(Seq/Nota/Serie)</span>
<div style="position:absolute;left:296px;top:210px;width:94px;height:12px;border:5px solid #ed1c24;background:#fff"></div>
<div style="position:absolute;left:400px;top:209px;width:82px;height:13px;border:5px solid #3f48cc;border-left-width:4px;border-right-width:4px;background:#fff"></div>
<span class="t" id="s30" style="left:302.61px;top:217.20px;font-size:11px;line-height:11px;letter-spacing:0.223px;font-family:'DejaVu Sans Mono', 'Liberation Mono', monospace;">*****</span>
<span class="t" id="s31" style="left:408.41px;top:216.60px;font-size:11px;line-height:11px;letter-spacing:0.171px;font-family:'DejaVu Sans Mono', 'Liberation Mono', monospace;">****</span>
<div class="f" style="left:490px;top:210px;width:22px;height:17px"></div>
<span class="t" id="s32" style="left:496.61px;top:215.20px;font-size:11px;line-height:11px;letter-spacing:0.000px;font-family:'DejaVu Sans Mono', 'Liberation Mono', monospace;">*</span>
<span class="t" id="t33" style="left:600.00px;top:216.11px;font-size:10.5px;line-height:10.5px;color:#000;font-family:'Liberation Sans', sans-serif;letter-spacing:0.103px;">Marca</span>
<div class="f" style="left:633px;top:211px;width:116px;height:17px"></div>
<span class="t" id="t34" style="left:40.00px;top:236.11px;font-size:10.5px;line-height:10.5px;color:#000;font-family:'Liberation Sans', sans-serif;letter-spacing:0.255px;">Fornecedor</span>
<div class="f" style="left:98px;top:232px;width:24px;height:17px"></div>
<div class="f" style="left:123px;top:232px;width:25px;height:17px"></div>
<div class="f" style="left:149px;top:232px;width:51px;height:17px"></div>
<div class="f" style="left:201px;top:232px;width:468px;height:17px"></div>
<span class="t" id="t35" style="left:104.00px;top:236.11px;font-size:10.5px;line-height:10.5px;color:#9a9a9a;font-family:'Liberation Sans', sans-serif;letter-spacing:-0.600px;">01</span>
<span class="t" id="s36" style="left:132.61px;top:238.20px;font-size:11px;line-height:11px;letter-spacing:0.000px;font-family:'DejaVu Sans Mono', 'Liberation Mono', monospace;">*</span>
<span class="t" id="s37" style="left:169.61px;top:237.20px;font-size:11px;line-height:11px;letter-spacing:-0.029px;font-family:'DejaVu Sans Mono', 'Liberation Mono', monospace;">****</span>
<span class="t" id="s38" style="left:205.61px;top:237.20px;font-size:11px;line-height:11px;letter-spacing:0.061px;font-family:'DejaVu Sans Mono', 'Liberation Mono', monospace;">********</span>
<span class="t" id="t39" style="left:710.00px;top:236.11px;font-size:10.5px;line-height:10.5px;color:#000;font-family:'Liberation Sans', sans-serif;letter-spacing:0.500px;">Uf</span>
<div class="f" style="left:723px;top:232px;width:26px;height:17px"></div>
<span class="t" id="t40" style="left:25.00px;top:258.11px;font-size:10.5px;line-height:10.5px;color:#000;font-family:'Liberation Sans', sans-serif;letter-spacing:0.176px;">Representante</span>
<div class="f" style="left:98px;top:254px;width:24px;height:17px"></div>
<div class="f" style="left:123px;top:254px;width:25px;height:17px"></div>
<div class="f" style="left:149px;top:254px;width:51px;height:17px"></div>
<div class="f" style="left:201px;top:254px;width:285px;height:17px"></div>
<span class="t" id="t41" style="left:104.00px;top:259.11px;font-size:10.5px;line-height:10.5px;color:#9a9a9a;font-family:'Liberation Sans', sans-serif;letter-spacing:-0.600px;">04</span>
<span class="t" id="t42" style="left:499.00px;top:258.61px;font-size:10.5px;line-height:10.5px;color:#000;font-family:'Liberation Sans', sans-serif;letter-spacing:-0.365px;">RACI</span>
<div class="f" style="left:527px;top:254px;width:51px;height:17px"></div>
<span class="t" id="t43" style="left:590.00px;top:257.61px;font-size:10.5px;line-height:10.5px;color:#000;font-family:'Liberation Sans', sans-serif;letter-spacing:0.456px;">Ano</span>
<div class="f" style="left:611px;top:254px;width:35px;height:17px"></div>
<span class="t" id="t44" style="left:665.00px;top:258.61px;font-size:10.5px;line-height:10.5px;color:#000;font-family:'Liberation Sans', sans-serif;letter-spacing:-0.389px;">RACC</span>
<div class="f" style="left:699px;top:254px;width:50px;height:17px"></div>
<span class="t" id="t45" style="left:721.00px;top:258.61px;font-size:10.5px;line-height:10.5px;color:#000;font-family:'Liberation Sans', sans-serif;">0</span>
<div style="position:absolute;left:389px;top:272px;width:1px;height:3px;background:#000"></div>
<span class="t" id="t46" style="left:36.00px;top:281.61px;font-size:10.5px;line-height:10.5px;color:#000;font-family:'Liberation Sans', sans-serif;letter-spacing:-0.110px;">Forma Pagto</span>
<div class="cb" style="left:99px;top:277px;width:121px;height:20px"><i></i><b></b></div>
<span class="t" id="t47" style="left:324.00px;top:281.61px;font-size:10.5px;line-height:10.5px;color:#000;font-family:'Liberation Sans', sans-serif;letter-spacing:-0.020px;">Consumidor Final</span>
<div class="cb" style="left:411px;top:277px;width:169px;height:20px"><i></i><b></b></div>
<span class="t" id="t48" style="left:415.00px;top:281.61px;font-size:10.5px;line-height:10.5px;color:#000;font-family:'Liberation Sans', sans-serif;letter-spacing:-0.102px;">Consumo Final Sim</span>
<span class="t" id="t49" style="left:622.00px;top:281.61px;font-size:10.5px;line-height:10.5px;color:#000;font-family:'Liberation Sans', sans-serif;letter-spacing:0.001px;">Tipo Docto</span>
<div class="cb" style="left:679px;top:277px;width:71px;height:20px"><i></i><b></b></div>
<span class="t" id="t50" style="left:683.00px;top:281.61px;font-size:10.5px;line-height:10.5px;color:#000;font-family:'Liberation Sans', sans-serif;letter-spacing:0.116px;">Fiscal</span>
<span class="t" id="t51" style="left:38.00px;top:309.11px;font-size:10.5px;line-height:10.5px;color:#000;font-family:'Liberation Sans', sans-serif;letter-spacing:-0.018px;">Situação NF</span>
<div class="cb dis" style="left:98px;top:301px;width:120px;height:20px"><i></i><b></b></div>
<span class="t" id="t52" style="left:102.00px;top:305.61px;font-size:10.5px;line-height:10.5px;color:#9aa0ad;font-family:'Liberation Sans', sans-serif;letter-spacing:0.104px;">Liberada</span>
<span class="t" id="t53" style="left:224.00px;top:308.11px;font-size:10.5px;line-height:10.5px;color:#000;font-family:'Liberation Sans', sans-serif;letter-spacing:0.109px;">Nat. Operacao</span>
<div class="f" style="left:298px;top:304px;width:62px;height:17px"></div>
<div class="f" style="left:361px;top:304px;width:241px;height:17px"></div>
<span class="t" id="s54" style="left:301.41px;top:310.60px;font-size:11px;line-height:11px;letter-spacing:0.094px;font-family:'DejaVu Sans Mono', 'Liberation Mono', monospace;">******</span>
<span class="t" id="s55" style="left:364.61px;top:310.20px;font-size:11px;line-height:11px;letter-spacing:0.051px;font-family:'DejaVu Sans Mono', 'Liberation Mono', monospace;">*********</span>
<span class="t" id="t56" style="left:619.00px;top:308.11px;font-size:10.5px;line-height:10.5px;color:#000;font-family:'Liberation Sans', sans-serif;letter-spacing:0.092px;">Desconto</span>
<div class="f" style="left:667px;top:304px;width:82px;height:17px"></div>
<span class="t" id="t57" style="left:12.40px;top:331.61px;font-size:10.5px;line-height:10.5px;color:#000;font-family:'Liberation Sans', sans-serif;letter-spacing:-0.020px;">Motivo Cancelamento</span>
<div class="cb dis" style="left:123px;top:325px;width:314px;height:20px"><i></i><b></b></div>
<div class="cb" style="left:490px;top:325px;width:260px;height:20px"><i></i><b></b></div>
<span class="t" id="t58" style="left:494.00px;top:329.61px;font-size:10.5px;line-height:10.5px;color:#000;font-family:'Liberation Sans', sans-serif;letter-spacing:0.074px;">2 - Nf Saida / Nf Entrada (Digitacao Manual)</span>
<div class="etch" style="left:756px;top:235px;width:125px;height:79px"></div>
<span class="t" id="t59" style="left:801.00px;top:238.10px;font-size:11.7px;line-height:11.7px;color:#000;font-family:'Liberation Sans', sans-serif;font-weight:bold;letter-spacing:0.176px;">Imprimir</span>
<div class="btn" style="left:766px;top:255px;width:47px;height:39px"><svg style="position:absolute;left:5px;top:-1px" width="36" height="36" viewBox="0 0 669 669"><path d="M72 238L100 212L298 52H368L474 172L484 226L566 300L604 338L598 444L462 594L420 566L350 596L268 574L212 558L78 404Z" fill="#000"/><path d="M108 244L300 78H356L448 182L216 384Z" fill="#f2f2f2"/><path d="M160 262L330 112M190 290L362 140M216 318L390 166M236 348L414 190M170 300L300 160" stroke="#b8b8b8" stroke-width="9" fill="none"/><path d="M128 250L300 100" stroke="#8a8a00" stroke-width="15"/><path d="M98 258L118 240L226 378L206 398Z" fill="#d0d0d0"/><path d="M96 292L204 396L208 540L96 408Z" fill="#8c8c8c"/><path d="M206 420L242 442V552L206 540Z" fill="#fff"/><path d="M264 408L300 440V570L264 560Z" fill="#fff"/><path d="M322 418L356 450V582L322 572Z" fill="#fff"/><path d="M424 250L452 226L562 330L534 360Z" fill="#fff"/><path d="M398 214L446 186L470 228L440 246Z" fill="#9a9a9a"/><path d="M350 406L470 312L600 432L456 588Z" fill="#fafafa"/><path d="M392 400L470 340M410 430L500 360M440 470L520 400M440 520L556 420M430 500L470 470" stroke="#b0b0b0" stroke-width="11" fill="none"/><path d="M572 326L602 352" stroke="#8c8c8c" stroke-width="12"/></svg></div>
<div class="etch" style="left:9px;top:362px;width:714px;height:32px"></div>
<div style="position:absolute;left:15px;top:359px;width:94px;height:8px;background:#c0c0c0"></div>
<span class="t" id="t60" style="left:24.00px;top:357.43px;font-size:11.3px;line-height:11.3px;color:#000;font-family:'Liberation Sans', sans-serif;font-weight:bold;letter-spacing:-0.028px;">Outros Dados</span>
<div class="btn" style="left:30px;top:371px;width:56px;height:20px;line-height:18px;font-size:10.5px"><span style="position:relative;top:-0.5px">Produtos</span></div>
<div class="btn" style="left:99px;top:371px;width:50px;height:20px;line-height:18px;font-size:10.5px"><span style="position:relative;top:-0.5px">Di.</span></div>
<div class="btn" style="left:156px;top:371px;width:74px;height:20px;line-height:18px;font-size:10.5px"><span style="position:relative;top:-0.5px">Observacoes</span></div>
<div class="btn" style="left:242px;top:371px;width:60px;height:20px;line-height:18px;font-size:10.5px"><span style="position:relative;top:-0.5px">Parcelas</span></div>
<div class="btn" style="left:314px;top:371px;width:47px;height:20px;line-height:18px;font-size:10.5px"><span style="position:relative;top:-0.5px">Fretes</span></div>
<div class="btn" style="left:372px;top:371px;width:59px;height:20px;line-height:18px;font-size:10.5px"><span style="position:relative;top:-0.5px">Pessoas</span></div>
<div class="btn" style="left:439px;top:371px;width:78px;height:20px;line-height:18px;font-size:10.5px"><span style="position:relative;top:-0.5px">Reenviar Nfe</span></div>
<div class="btn" style="left:524px;top:371px;width:86px;height:20px;line-height:18px;font-size:10.5px"><span style="position:relative;top:-0.5px">Espelho Nf</span></div>
<div class="etch" style="left:9px;top:402px;width:665px;height:129px"></div>
<div style="position:absolute;left:15px;top:399px;width:36px;height:8px;background:#c0c0c0"></div>
<div style="position:absolute;left:227px;top:399px;width:74px;height:8px;background:#c0c0c0"></div>
<div style="position:absolute;left:424px;top:399px;width:51px;height:8px;background:#c0c0c0"></div>
<span class="t" id="t61" style="left:20.00px;top:401.43px;font-size:11.3px;line-height:11.3px;color:#000;font-family:'Liberation Sans', sans-serif;font-weight:bold;letter-spacing:0.217px;">Icms</span>
<span class="t" id="t62" style="left:236.00px;top:401.43px;font-size:11.3px;line-height:11.3px;color:#000;font-family:'Liberation Sans', sans-serif;font-weight:bold;letter-spacing:0.233px;">Despesas</span>
<span class="t" id="t63" style="left:432.00px;top:400.43px;font-size:11.3px;line-height:11.3px;color:#000;font-family:'Liberation Sans', sans-serif;font-weight:bold;letter-spacing:0.233px;">Totais</span>
<div class="vsep" style="left:218px;top:402px;height:213px"></div>
<div class="vsep" style="left:413px;top:402px;height:69px"></div>
<div class="hsep" style="left:219px;top:471px;width:449px"></div>
<div class="f" style="left:94px;top:414px;width:118px;height:17px"></div>
<span class="t" id="t64" style="left:67.00px;top:419.11px;font-size:10.5px;line-height:10.5px;color:#000;font-family:'Liberation Sans', sans-serif;letter-spacing:0.221px;white-space:pre;">Base</span>
<span class="t" id="s65" style="left:169.41px;top:420.20px;font-size:11px;line-height:11px;letter-spacing:0.174px;font-family:'DejaVu Sans Mono', 'Liberation Mono', monospace;">******</span>
<div class="f" style="left:94px;top:434px;width:118px;height:18px"></div>
<span class="t" id="t66" style="left:66.00px;top:439.11px;font-size:10.5px;line-height:10.5px;color:#000;font-family:'Liberation Sans', sans-serif;letter-spacing:0.466px;white-space:pre;">Valor</span>
<span class="t" id="s67" style="left:169.41px;top:439.70px;font-size:11px;line-height:11px;letter-spacing:0.174px;font-family:'DejaVu Sans Mono', 'Liberation Mono', monospace;">******</span>
<div class="f" style="left:94px;top:453px;width:118px;height:17px"></div>
<span class="t" id="t68" style="left:33.00px;top:457.61px;font-size:10.5px;line-height:10.5px;color:#000;font-family:'Liberation Sans', sans-serif;letter-spacing:0.197px;white-space:pre;">Base Subst.</span>
<span class="t" id="s69" style="left:169.41px;top:458.70px;font-size:11px;line-height:11px;letter-spacing:0.174px;font-family:'DejaVu Sans Mono', 'Liberation Mono', monospace;">******</span>
<div class="f" style="left:94px;top:471px;width:118px;height:18px"></div>
<span class="t" id="t70" style="left:32.00px;top:477.11px;font-size:10.5px;line-height:10.5px;color:#000;font-family:'Liberation Sans', sans-serif;letter-spacing:0.289px;white-space:pre;">Valor Subst.</span>
<span class="t" id="s71" style="left:169.41px;top:476.70px;font-size:11px;line-height:11px;letter-spacing:0.174px;font-family:'DejaVu Sans Mono', 'Liberation Mono', monospace;">******</span>
<div class="f" style="left:94px;top:491px;width:118px;height:18px"></div>
<span class="t" id="t72" style="left:31.00px;top:494.11px;font-size:10.5px;line-height:10.5px;color:#000;font-family:'Liberation Sans', sans-serif;letter-spacing:0.043px;white-space:pre;">Qtd. Especie</span>
<div class="f" style="left:94px;top:511px;width:118px;height:18px"></div>
<span class="t" id="t73" style="left:54.00px;top:514.61px;font-size:10.5px;line-height:10.5px;color:#000;font-family:'Liberation Sans', sans-serif;letter-spacing:0.040px;white-space:pre;">Especie</span>
<div class="f" style="left:94px;top:534px;width:118px;height:17px"></div>
<span class="t" id="t74" style="left:47.00px;top:537.11px;font-size:10.5px;line-height:10.5px;color:#000;font-family:'Liberation Sans', sans-serif;letter-spacing:0.030px;white-space:pre;">Base  Pis</span>
<span class="t" id="s75" style="left:168.61px;top:540.20px;font-size:11px;line-height:11px;letter-spacing:0.134px;font-family:'DejaVu Sans Mono', 'Liberation Mono', monospace;">******</span>
<div class="f" style="left:94px;top:553px;width:118px;height:17px"></div>
<span class="t" id="t76" style="left:61.00px;top:556.11px;font-size:10.5px;line-height:10.5px;color:#000;font-family:'Liberation Sans', sans-serif;letter-spacing:0.139px;white-space:pre;">Vlr.Pis</span>
<span class="t" id="s77" style="left:167.61px;top:558.70px;font-size:11px;line-height:11px;letter-spacing:0.134px;font-family:'DejaVu Sans Mono', 'Liberation Mono', monospace;">******</span>
<div class="f" style="left:94px;top:571px;width:118px;height:18px"></div>
<span class="t" id="t78" style="left:30.00px;top:576.11px;font-size:10.5px;line-height:10.5px;color:#000;font-family:'Liberation Sans', sans-serif;letter-spacing:0.188px;white-space:pre;">Base  Cofins</span>
<span class="t" id="s79" style="left:169.41px;top:578.20px;font-size:11px;line-height:11px;letter-spacing:0.174px;font-family:'DejaVu Sans Mono', 'Liberation Mono', monospace;">******</span>
<div class="f" style="left:94px;top:590px;width:118px;height:17px"></div>
<span class="t" id="t80" style="left:44.00px;top:595.11px;font-size:10.5px;line-height:10.5px;color:#000;font-family:'Liberation Sans', sans-serif;letter-spacing:0.296px;white-space:pre;">Vlr.Cofins</span>
<span class="t" id="s81" style="left:169.41px;top:596.70px;font-size:11px;line-height:11px;letter-spacing:0.174px;font-family:'DejaVu Sans Mono', 'Liberation Mono', monospace;">******</span>
<div class="f" style="left:305px;top:414px;width:101px;height:17px"></div>
<span class="t" id="t82" style="left:267.00px;top:418.11px;font-size:10.5px;line-height:10.5px;color:#000;font-family:'Liberation Sans', sans-serif;letter-spacing:0.148px;">Seguro</span>
<span class="t" id="s83" style="left:374.61px;top:417.20px;font-size:11px;line-height:11px;letter-spacing:0.105px;font-family:'DejaVu Sans Mono', 'Liberation Mono', monospace;">****</span>
<div class="f" style="left:305px;top:434px;width:101px;height:18px"></div>
<span class="t" id="t84" style="left:246.00px;top:435.11px;font-size:10.5px;line-height:10.5px;color:#000;font-family:'Liberation Sans', sans-serif;letter-spacing:0.471px;">Acessorios</span>
<span class="t" id="s85" style="left:377.41px;top:438.70px;font-size:11px;line-height:11px;letter-spacing:0.238px;font-family:'DejaVu Sans Mono', 'Liberation Mono', monospace;">****</span>
<div class="f" style="left:305px;top:453px;width:101px;height:17px"></div>
<span class="t" id="t86" style="left:222.00px;top:455.11px;font-size:10.5px;line-height:10.5px;color:#000;font-family:'Liberation Sans', sans-serif;letter-spacing:0.141px;">Frete Destacado</span>
<span class="t" id="s87" style="left:376.61px;top:458.20px;font-size:11px;line-height:11px;letter-spacing:0.105px;font-family:'DejaVu Sans Mono', 'Liberation Mono', monospace;">****</span>
<div class="f" style="left:305px;top:478px;width:101px;height:17px"></div>
<span class="t" id="t88" style="left:245.60px;top:482.11px;font-size:10.5px;line-height:10.5px;color:#000;font-family:'Liberation Sans', sans-serif;letter-spacing:0.156px;">Vlr.Funrural</span>
<div class="f" style="left:523px;top:414px;width:135px;height:17px"></div>
<span class="t" id="t89" style="left:503.00px;top:417.11px;font-size:10.5px;line-height:10.5px;color:#000;font-family:'Liberation Sans', sans-serif;letter-spacing:-0.547px;">Ipi</span>
<span class="t" id="s90" style="left:626.41px;top:420.20px;font-size:11px;line-height:11px;letter-spacing:0.171px;font-family:'DejaVu Sans Mono', 'Liberation Mono', monospace;">****</span>
<div class="f" style="left:523px;top:434px;width:135px;height:18px"></div>
<span class="t" id="t91" style="left:476.40px;top:436.61px;font-size:10.5px;line-height:10.5px;color:#000;font-family:'Liberation Sans', sans-serif;letter-spacing:-0.030px;">Produto</span>
<span class="t" id="s92" style="left:627.41px;top:440.20px;font-size:11px;line-height:11px;letter-spacing:0.171px;font-family:'DejaVu Sans Mono', 'Liberation Mono', monospace;">****</span>
<div class="f" style="left:523px;top:453px;width:135px;height:17px"></div>
<span class="t" id="t93" style="left:491.60px;top:456.61px;font-size:10.5px;line-height:10.5px;color:#000;font-family:'Liberation Sans', sans-serif;letter-spacing:-0.263px;">Nota</span>
<span class="t" id="s94" style="left:628.41px;top:456.70px;font-size:11px;line-height:11px;letter-spacing:0.171px;font-family:'DejaVu Sans Mono', 'Liberation Mono', monospace;">****</span>
<div class="f" style="left:523px;top:475px;width:135px;height:17px"></div>
<span class="t" id="t95" style="left:456.00px;top:478.61px;font-size:10.5px;line-height:10.5px;color:#000;font-family:'Liberation Sans', sans-serif;letter-spacing:-0.011px;">Peso Liquido</span>
<span class="t" id="s96" style="left:628.41px;top:479.20px;font-size:11px;line-height:11px;letter-spacing:0.171px;font-family:'DejaVu Sans Mono', 'Liberation Mono', monospace;">****</span>
<div class="f" style="left:523px;top:495px;width:135px;height:18px"></div>
<span class="t" id="t97" style="left:464.00px;top:497.61px;font-size:10.5px;line-height:10.5px;color:#000;font-family:'Liberation Sans', sans-serif;letter-spacing:0.072px;">Peso Bruto</span>
<span class="t" id="s98" style="left:629.41px;top:502.20px;font-size:11px;line-height:11px;letter-spacing:0.171px;font-family:'DejaVu Sans Mono', 'Liberation Mono', monospace;">****</span>
<div class="btn" style="left:679px;top:482px;width:145px;height:20px;line-height:18px;font-size:10.5px"><span style="position:relative;top:0px">Motivo Nao Gerou Scm</span></div>
<div class="btn" style="left:680px;top:507px;width:66px;height:20px;line-height:18px;font-size:10.5px"><span style="position:relative;top:0px">Gerar Scm</span></div>
<div style="position:absolute;left:226px;top:560px;width:645px;height:20px;background:#ebebeb"></div>
<span class="t" id="s99" style="left:386.51px;top:566.20px;font-size:11px;line-height:11px;letter-spacing:0.043px;font-family:'DejaVu Sans Mono', 'Liberation Mono', monospace;">******************************************</span>
<div class="btn" style="left:878px;top:561px;width:91px;height:18px;line-height:16px;font-size:10.5px"><span style="position:relative;top:0px">Ocorrencia Nfe</span></div>
<div class="btn" style="left:227px;top:583px;width:274px;height:22px;line-height:20px;font-size:10.5px"><span style="position:relative;top:0.5px">Proximo Numero Nota</span></div>
<div style="position:absolute;left:4px;top:641px;width:25px;height:19px;border:3px solid #ff0000;border-radius:3px;background:#92b5da"></div>
<span class="t" id="t100" style="left:11.20px;top:649.11px;font-size:10.5px;line-height:10.5px;color:#000;font-family:'Liberation Sans', sans-serif;letter-spacing:-0.600px;">N.F</span>
<div style="position:absolute;left:37px;top:644px;width:115px;height:21px;background:#c8d8ec;border-radius:0 0 4px 4px"></div>
<span class="t" id="t101" style="left:44.40px;top:649.11px;font-size:10.5px;line-height:10.5px;color:#1a1a1a;font-family:'Liberation Sans', sans-serif;letter-spacing:0.055px;">Gerar NF. Importacao</span>
<div style="position:absolute;left:0;top:666px;width:1298px;height:1px;background:#cfccc8"></div>
<div style="position:absolute;left:0;top:667px;width:1296px;height:1px;background:#3f5f98;border-radius:0 0 3px 3px"></div>
<div style="position:absolute;left:0;top:668px;width:1298px;height:1px;background:#f4fbfd"></div>
<div style="position:absolute;left:835px;top:668px;width:250px;height:1px;background:#2f8fb5"></div>
<div style="position:absolute;left:0;top:24px;width:1298px;height:1px;background:#b6b6b6"></div>
</body></html>
